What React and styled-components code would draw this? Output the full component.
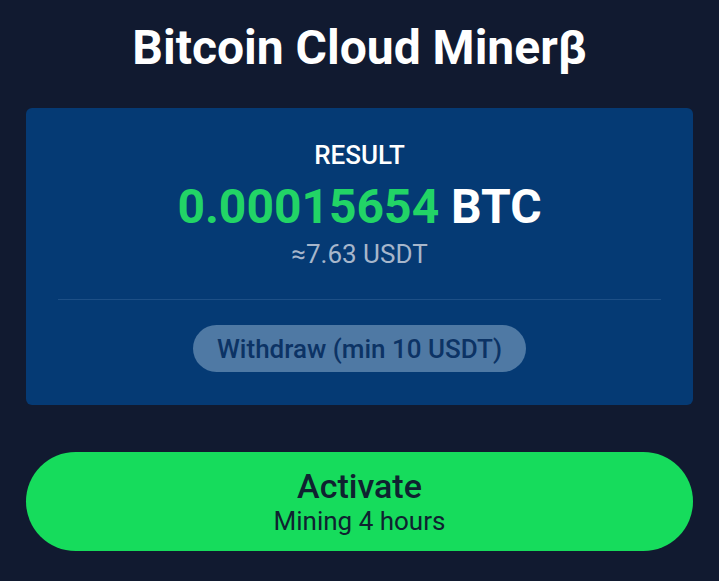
import React from "react";
import styled, { createGlobalStyle } from "styled-components";

const GlobalStyle = createGlobalStyle`
  html, body {
    margin: 0;
    padding: 0;
    background: #111a30;
  }
  body {
    font-family: Roboto, "Noto Sans", sans-serif;
  }
`;

const Page = styled.div`
  width: 719px;
  height: 581px;
  box-sizing: border-box;
  padding: 20px 26px 0;
  display: flex;
  flex-direction: column;
  background: #111a30;
`;

const Title = styled.h1`
  margin: 0;
  text-align: center;
  color: #ffffff;
  font-size: 48px;
  font-weight: 700;
  line-height: 56px;
`;

const Card = styled.section`
  margin-top: 32px;
  height: 297px;
  box-sizing: border-box;
  background: #053a74;
  border-radius: 6px;
  padding: 32px 32px 0;
  display: flex;
  flex-direction: column;
  align-items: center;
`;

const Label = styled.div`
  color: #ffffff;
  font-size: 26px;
  font-weight: 500;
  line-height: 30px;
`;

const Amount = styled.div`
  margin-top: 9px;
  font-size: 48px;
  font-weight: 700;
  line-height: 56px;
  color: #ffffff;
`;

const Green = styled.span`
  color: #22d466;
`;

const Approx = styled.div`
  margin-top: 3px;
  color: #a7b6cb;
  font-size: 26px;
  line-height: 32px;
`;

const Divider = styled.hr`
  align-self: stretch;
  margin: 29px 0 0;
  border: 0;
  height: 1px;
  background: #1d4f86;
`;

const Withdraw = styled.button`
  margin-top: 25px;
  height: 47px;
  padding: 0 24px;
  border: 0;
  border-radius: 24px;
  background: #4f79a4;
  color: #0c3365;
  font-family: Roboto, sans-serif;
  font-size: 26px;
  font-weight: 500;
`;

const Activate = styled.button`
  margin-top: 47px;
  height: 99px;
  border: 0;
  border-radius: 50px;
  background: #16dc5c;
  display: flex;
  flex-direction: column;
  align-items: center;
  justify-content: center;
  font-family: Roboto, sans-serif;
  color: #0f2230;
`;

const ActivateMain = styled.span`
  font-size: 34px;
  font-weight: 500;
  line-height: 38px;
`;

const ActivateSub = styled.span`
  font-size: 26px;
  line-height: 32px;
`;

export default function App() {
  return (
    <>
      <GlobalStyle />
      <Page>
        <Title>Bitcoin Cloud Minerβ</Title>
        <Card>
          <Label>RESULT</Label>
          <Amount>
            <Green>0.00015654</Green> BTC
          </Amount>
          <Approx>≈7.63 USDT</Approx>
          <Divider />
          <Withdraw>Withdraw (min 10 USDT)</Withdraw>
        </Card>
        <Activate>
          <ActivateMain>Activate</ActivateMain>
          <ActivateSub>Mining 4 hours</ActivateSub>
        </Activate>
      </Page>
    </>
  );
}
